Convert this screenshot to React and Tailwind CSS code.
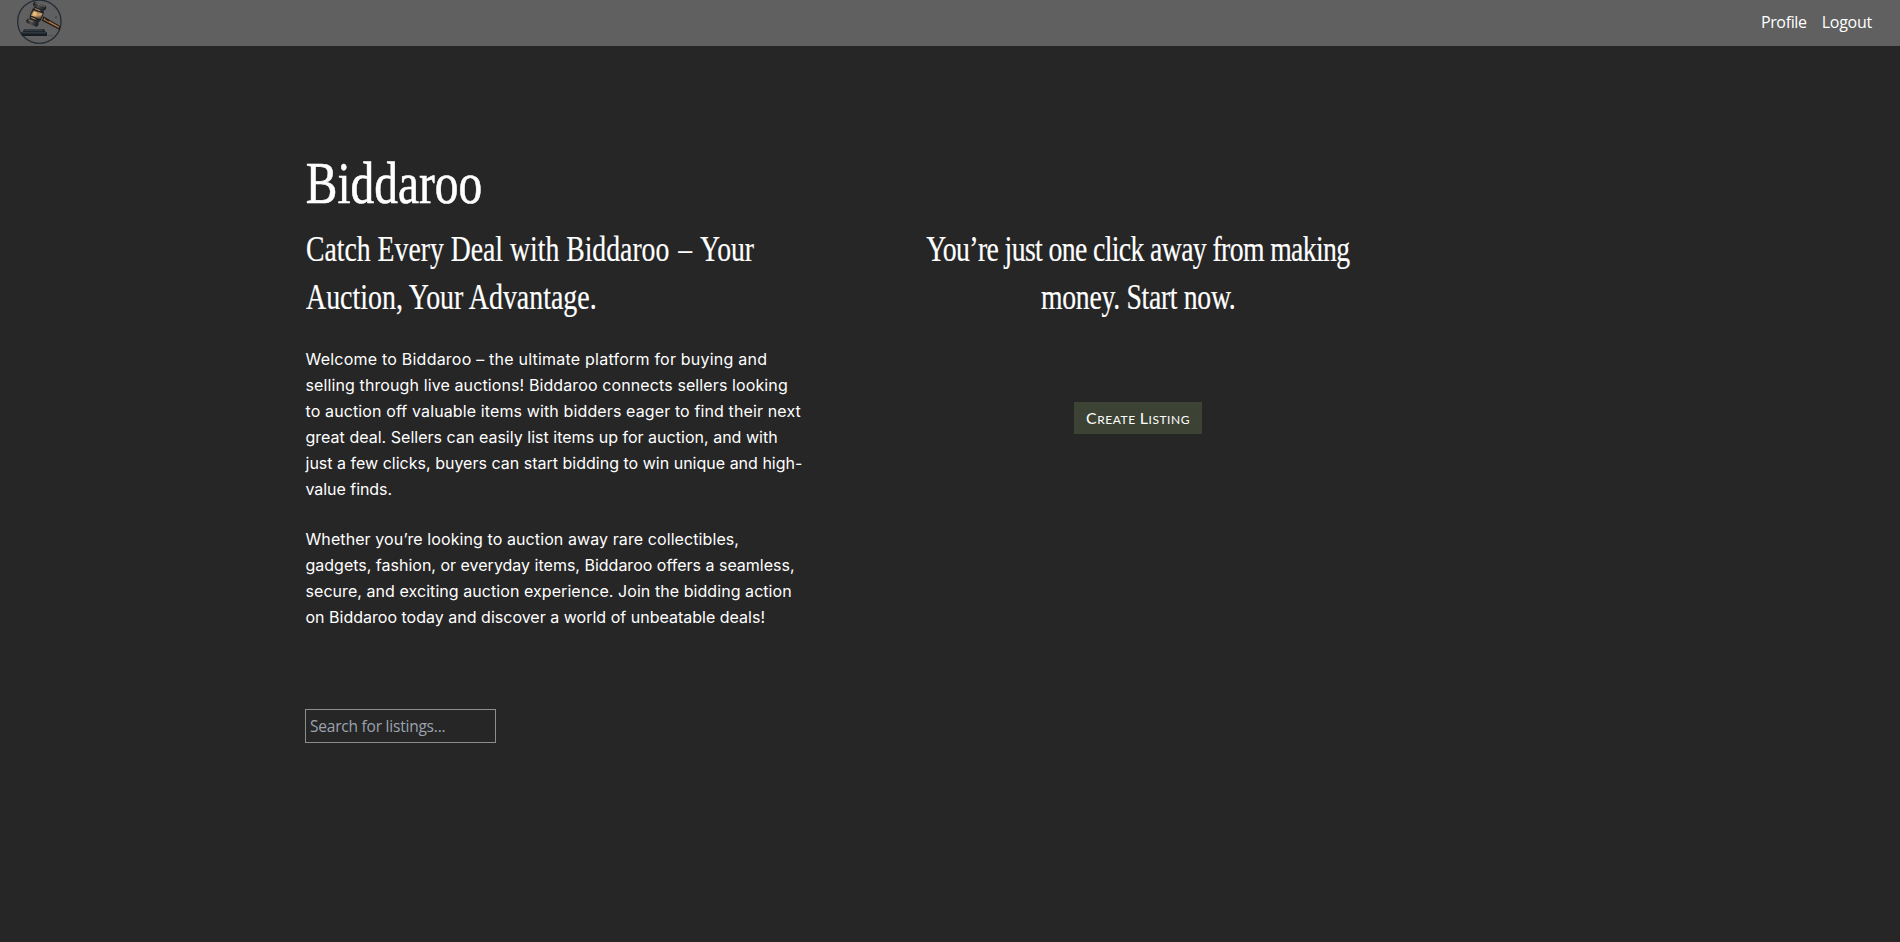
function GavelLogo() {
  return (
    <svg viewBox="48 0 140 138" className="h-[46px] w-[46.7px]" aria-hidden="true">
      <defs>
        <linearGradient id="brass" x1="0" y1="0" x2="1" y2="1">
          <stop offset="0" stopColor="#3a2f24" />
          <stop offset="0.35" stopColor="#a87e4b" />
          <stop offset="0.55" stopColor="#cfa56c" />
          <stop offset="1" stopColor="#3c2a1b" />
        </linearGradient>
        <linearGradient id="steel" x1="0" y1="0" x2="1" y2="0">
          <stop offset="0" stopColor="#171c22" />
          <stop offset="0.4" stopColor="#4b4f52" />
          <stop offset="1" stopColor="#14191f" />
        </linearGradient>
      </defs>
      <circle cx="118" cy="65" r="65" fill="none" stroke="#252d36" strokeWidth="4" />
      <path d="M130 49 L180 78 L180 91 L174 87 L126 62 Z" fill="#1b1b1e" />
      <path d="M133 54 L178 80 L176 84 L130 59 Z" fill="#a8703c" />
      <path d="M136 56 L148 63" stroke="#2a211c" strokeWidth="5" />
      <g transform="rotate(22 110 44)">
        <path d="M97 22 H124 L128 33 V55 L123 66 H97 L92 54 V34 Z" fill="#1c2026" />
        <path d="M95 34 H125 V53 H95 Z" fill="url(#brass)" />
        <path d="M98 37 H109 V49 H98 Z" fill="#e7bd83" />
        <rect x="88" y="10" width="41" height="14" rx="6" fill="url(#steel)" />
        <path d="M93 13 H124" stroke="#86745a" strokeWidth="2" />
        <rect x="95" y="25" width="30" height="6" rx="2" fill="#232830" />
        <path d="M98 29 H116" stroke="#c89558" strokeWidth="2.5" />
        <rect x="94" y="56" width="31" height="6" rx="2" fill="#2a2723" />
        <path d="M98 58 H112" stroke="#c3935b" strokeWidth="2.5" />
        <rect x="88" y="64" width="38" height="14" rx="6" fill="url(#steel)" />
        <path d="M93 68 H108" stroke="#9a7b54" strokeWidth="2.5" />
      </g>
      <path d="M72 87 H132 L137 96 H68 Z" fill="#20262d" />
      <path d="M73 90 H128" stroke="#53585b" strokeWidth="2.5" />
      <path d="M63 97 H141 V108 H66 Z" fill="#171d24" />
      <path d="M66 99 H138" stroke="#4a5054" strokeWidth="2" />
      <path d="M168 49 V55 M165 52 H171" stroke="#343a41" strokeWidth="2" />
      <path d="M146 107 H150 M154 107 H157" stroke="#3b4046" strokeWidth="3" />
    </svg>
  );
}

const intro = [
  ['Welcome to Biddaroo – the ultimate platform for buying and', 'tracking-[0.22px]'],
  ['selling through live auctions! Biddaroo connects sellers looking', 'tracking-[0.11px]'],
  ['to auction off valuable items with bidders eager to find their next', 'tracking-[0.12px]'],
  ['great deal. Sellers can easily list items up for auction, and with', 'tracking-[0.02px]'],
  ['just a few clicks, buyers can start bidding to win unique and high-', 'tracking-[0.01px]'],
  ['value finds.', 'tracking-[-0.05px]'],
];

const details = [
  ['Whether you’re looking to auction away rare collectibles,', 'tracking-[0.09px]'],
  ['gadgets, fashion, or everyday items, Biddaroo offers a seamless,', 'tracking-[0px]'],
  ['secure, and exciting auction experience. Join the bidding action', 'tracking-[0.06px]'],
  ['on Biddaroo today and discover a world of unbeatable deals!', 'tracking-[0.01px]'],
];

function Paragraph({ lines, className }) {
  return (
    <p className={`pl-[0.5px] font-[Inter,sans-serif] text-base leading-[26px] whitespace-nowrap ${className}`}>
      {lines.map(([text, tracking]) => (
        <span key={text} className={`block ${tracking}`}>{text}</span>
      ))}
    </p>
  );
}

export default function App() {
  return (
    <div className="min-h-screen bg-[#262626] font-[Open_Sans,sans-serif] text-white">
      <header className="flex h-[46px] items-center justify-between bg-[#606060] pr-7 pl-4">
        <GavelLogo />
        <nav className="flex gap-[15px] pb-0.5 text-base leading-6">
          <a href="#profile" className="tracking-[-0.35px]">Profile</a>
          <a href="#logout" className="tracking-[-0.25px]">Logout</a>
        </nav>
      </header>
      <main className="grid grid-cols-[500px_500px] gap-x-[83px] pt-[107px] pl-[305px]">
        <section>
          <h1 className="origin-left scale-x-[0.79] pl-px font-[Liberation_Serif,serif] text-6xl leading-none whitespace-nowrap [-webkit-text-stroke:0.6px_white]">
            Biddaroo
          </h1>
          <h2 className="mt-3 pl-[0.5px] font-[Liberation_Serif,serif] text-4xl leading-[48px] whitespace-nowrap [-webkit-text-stroke:0.2px_white]">
            <span className="block origin-left scale-x-[0.77]">
              Catch Every Deal with Biddaroo <span className="mx-[2.5px] [-webkit-text-stroke:0]">–</span> Your
            </span>
            <span className="block origin-left scale-x-[0.775]">Auction, Your Advantage.</span>
          </h2>
          <Paragraph lines={intro} className="mt-[25px]" />
          <Paragraph lines={details} className="mt-6" />
          <input
            type="text"
            placeholder="Search for listings..."
            className="mt-[79px] block h-[34px] w-[191px] border border-[#8a8f8c] bg-transparent px-1 text-[15.5px] tracking-[-0.22px] placeholder:text-[#9ca3af]"
          />
        </section>
        <section className="flex flex-col items-center pt-[72px]">
          <h2 className="flex flex-col items-center font-[Liberation_Serif,serif] text-4xl leading-[48px] whitespace-nowrap [-webkit-text-stroke:0.2px_white]">
            <span className="block scale-x-[0.77] tracking-[-0.8px]">You’re just one click away from making</span>
            <span className="block scale-x-[0.77] tracking-[-0.4px]">money. Start now.</span>
          </h2>
          <button className="mt-[81px] flex h-8 w-32 items-center justify-center gap-[4px] bg-[#3d4334] font-[Lato,sans-serif] text-[12px] leading-4 tracking-[0.55px] uppercase">
            <span className="inline-block first-letter:text-base">Create</span>{' '}
            <span className="inline-block first-letter:text-base">Listing</span>
          </button>
        </section>
      </main>
    </div>
  );
}
